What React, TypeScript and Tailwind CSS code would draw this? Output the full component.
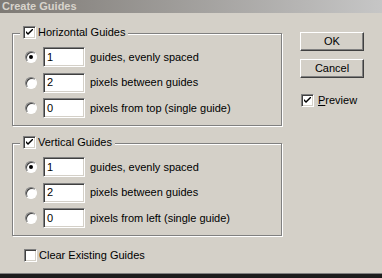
import React from 'react';

function CheckBox({ checked }: { checked: boolean }) {
  return (
    <div className="w-[13px] h-[13px] shrink-0 bg-white border border-t-[#808080] border-l-[#808080] border-b-white border-r-white shadow-[inset_1px_1px_0_#404040,inset_-1px_-1px_0_#d4d0c8] flex items-center justify-center">
      {checked && (
        <svg width="7" height="7" viewBox="0 0 7 7">
          <path d="M0 2 L0 4 L2 6 L7 1 L7 -1 L2 4 Z" fill="#000" />
        </svg>
      )}
    </div>
  );
}

function Radio({ checked }: { checked: boolean }) {
  return (
    <div className="w-[12px] h-[12px] shrink-0 rounded-full bg-white border border-t-[#808080] border-l-[#808080] border-b-white border-r-white shadow-[inset_1px_1px_0_#404040] flex items-center justify-center">
      {checked && <div className="w-[4px] h-[4px] rounded-full bg-black" />}
    </div>
  );
}

function Field({ value }: { value: string }) {
  return (
    <div className="w-[42px] h-[20px] shrink-0 bg-white border border-t-[#808080] border-l-[#808080] border-b-white border-r-white shadow-[inset_1px_1px_0_#404040,inset_-1px_-1px_0_#d4d0c8] flex items-center pl-[3px]">
      {value}
    </div>
  );
}

function Row({ checked, value, label }: { checked: boolean; value: string; label: string }) {
  return (
    <div className="flex items-center h-[20px]">
      <Radio checked={checked} />
      <div className="ml-[6px]">
        <Field value={value} />
      </div>
      <span className="ml-[5px] whitespace-nowrap">{label}</span>
    </div>
  );
}

function Group({ title, side }: { title: string; side: string }) {
  return (
    <div className="relative w-[270px] h-[93px] border border-[#808080] shadow-[1px_1px_0_#fff,inset_1px_1px_0_#fff]">
      <div className="absolute left-[7px] top-[-8px] px-[3px] bg-[#d4d0c8] flex items-center gap-[2px] h-[13px]">
        <CheckBox checked />
        <span className="whitespace-nowrap">{title}</span>
      </div>
      <div className="flex flex-col gap-[5.5px] pt-[13px] pl-[12px]">
        <Row checked value="1" label="guides, evenly spaced" />
        <Row checked={false} value="2" label="pixels between guides" />
        <Row checked={false} value="0" label={`pixels from ${side} (single guide)`} />
      </div>
    </div>
  );
}

function Button({ children }: { children: React.ReactNode }) {
  return (
    <div className="w-[64px] h-[19px] border border-t-white border-l-white border-r-[#404040] border-b-[#404040] shadow-[inset_-1px_-1px_0_#808080] flex items-center justify-center">
      {children}
    </div>
  );
}

export default function App() {
  return (
    <div className="w-[382px] h-[278px] bg-[#d4d0c8] flex flex-col font-['Liberation_Sans',Arial,sans-serif] text-[11px] text-black overflow-hidden">
      <div className="h-[13px] bg-gradient-to-r from-[#7e7a75] to-[#c6c6c6] flex items-center pl-[2px] font-bold text-[#d8d4cc] leading-none">
        Create Guides
      </div>
      <div className="flex flex-1">
        <div className="pl-[12px] pt-[20px] flex flex-col">
          <Group title="Horizontal Guides" side="top" />
          <div className="mt-[17px]">
            <Group title="Vertical Guides" side="left" />
          </div>
          <div className="mt-[11px] ml-[12px] flex items-center gap-[2px]">
            <CheckBox checked={false} />
            <span>Clear Existing Guides</span>
          </div>
        </div>
        <div className="ml-[18px] pt-[19px] flex flex-col">
          <Button>OK</Button>
          <div className="mt-[8px]">
            <Button>Cancel</Button>
          </div>
          <div className="mt-[14px] ml-[1px] flex items-center gap-[4px]">
            <CheckBox checked />
            <span>
              <span className="underline">P</span>review
            </span>
          </div>
        </div>
      </div>
      <div className="h-[1px] bg-[#808080]" />
      <div className="h-[4px] bg-[#1c1c1c]" />
    </div>
  );
}
